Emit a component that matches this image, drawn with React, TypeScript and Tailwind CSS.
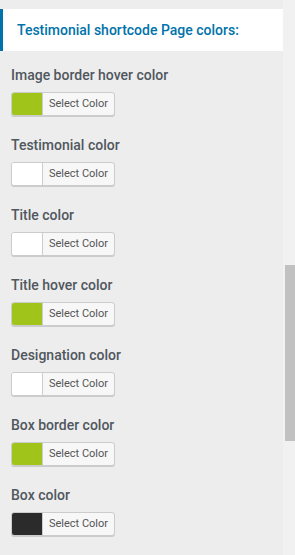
const fields = [
  { label: "Image border hover color", color: "bg-[#a1c41a]" },
  { label: "Testimonial color", color: "bg-white" },
  { label: "Title color", color: "bg-white" },
  { label: "Title hover color", color: "bg-[#a1c41a]" },
  { label: "Designation color", color: "bg-white" },
  { label: "Box border color", color: "bg-[#a1c41a]" },
  { label: "Box color", color: "bg-[#2b2b2b]" },
];

const ColorPicker = ({ color }: { color: string }) => (
  <button className="flex h-[24px] w-[104px] overflow-hidden rounded-[3px] border border-[#cccccc] bg-[#f7f7f7] shadow-[0_1px_0_#cccccc]">
    <span className={`h-full w-[31px] border-r border-[#cccccc] ${color}`} />
    <span className="flex-1 text-center text-[11px] leading-[22px] text-[#555555]">
      Select Color
    </span>
  </button>
);

export default function App() {
  return (
    <div
      className="flex h-[555px] w-[295px] overflow-hidden bg-[#ededed]"
      style={{ fontFamily: "Roboto, 'Liberation Sans', sans-serif" }}
    >
      <div className="w-[283px] pt-[9px]">
        <div className="flex h-[42px] items-center border-l-[3px] border-[#0073aa] bg-white pl-[14px]">
          <h2 className="text-[14px] font-medium text-[#0073aa]">
            Testimonial shortcode Page colors:
          </h2>
        </div>

        <div className="flex flex-col gap-[19px] px-[11px] pt-[14px]">
          {fields.map((field) => (
            <div key={field.label} className="flex flex-col gap-[7px]">
              <label className="text-[14px] font-medium leading-[20px] text-[#50575e]">
                {field.label}
              </label>
              <ColorPicker color={field.color} />
            </div>
          ))}
        </div>
      </div>

      {/* scrollbar */}
      <div className="w-[12px] bg-[#f1f1f1] pl-[2px]">
        <div className="mt-[265px] h-[176px] w-[10px] bg-[#c1c1c1]" />
      </div>
    </div>
  );
}
